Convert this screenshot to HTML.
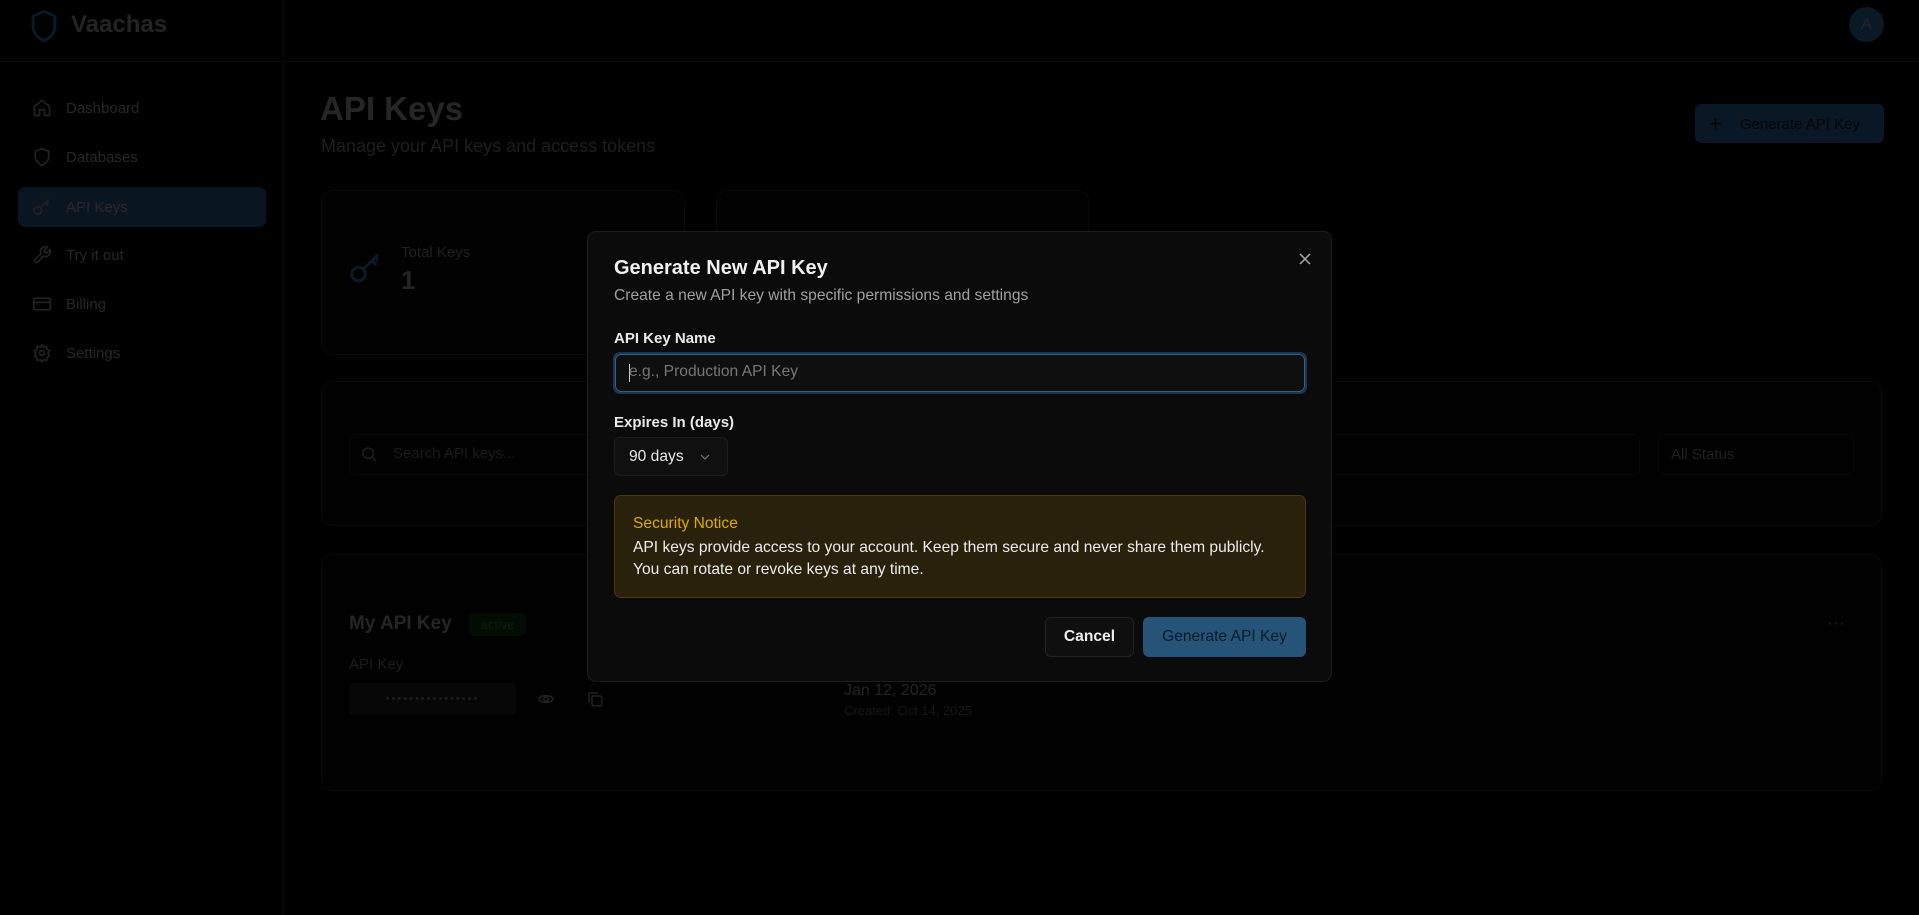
<!DOCTYPE html>
<html><head><meta charset="utf-8"><style>
*{box-sizing:border-box;margin:0;padding:0}
body{width:1919px;height:915px;background:#000;font-family:"Liberation Sans",sans-serif;position:relative;overflow:hidden;color:#262626}
.a{position:absolute}
.card{position:absolute;border:1px solid #0a0a0a;border-radius:12px;background:#010101}
.nav{position:absolute;left:18px;width:248px;height:40px;display:flex;align-items:center;font-size:15px;color:#272727}
.nav svg{margin-left:14px;margin-right:14px}
</style></head><body>
<div class="a" style="left:0;top:61px;width:1919px;height:1px;background:#080808"></div>
<div class="a" style="left:283px;top:0;width:1px;height:915px;background:#080808"></div>
<svg class="a" style="left:29px;top:9px" width="30" height="34" viewBox="0 0 24 28"><path d="M12 2 L21 6 V14 C21 20 17 24 12 26 C7 24 3 20 3 14 V6 Z" fill="none" stroke="#0a1a28" stroke-width="2.4" stroke-linejoin="round"/></svg>
<div class="a" style="left:71px;top:11px;font-size:24px;font-weight:bold;color:#242424">Vaachas</div>
<div class="a" style="left:1849px;top:7px;width:35px;height:35px;border-radius:50%;background:#0a1925;color:#262626;font-size:16px;text-align:center;line-height:35px">A</div>
<div class="nav" style="top:88px"><svg width="20" height="20" viewBox="0 0 24 24" fill="none" stroke="#222" stroke-width="2"><path d="M3 10 L12 3 L21 10 V21 H15 V14 H9 V21 H3 Z"/></svg>Dashboard</div>
<div class="nav" style="top:137px"><svg width="20" height="20" viewBox="0 0 24 24" fill="none" stroke="#222" stroke-width="2"><path d="M12 2 L20 5 V12 C20 17 16 20 12 22 C8 20 4 17 4 12 V5 Z"/></svg>Databases</div>
<div class="nav" style="top:187px;background:#091622;border-radius:7px;color:#2a2a2a"><svg width="20" height="20" viewBox="0 0 24 24" fill="none" stroke="#222" stroke-width="2"><circle cx="7" cy="16" r="4.5"/><path d="M10.5 12.5 L20 3 M16 7 L19 10 M18 5 L20 7"/></svg>API Keys</div>
<div class="nav" style="top:235px"><svg width="20" height="20" viewBox="0 0 24 24" fill="none" stroke="#222" stroke-width="2"><path d="M14.7 6.3a1 1 0 0 0 0 1.4l1.6 1.6a1 1 0 0 0 1.4 0l3.8-3.8a6 6 0 0 1-7.9 7.9l-6.9 6.9a2.1 2.1 0 0 1-3-3l6.9-6.9a6 6 0 0 1 7.9-7.9z"/></svg>Try it out</div>
<div class="nav" style="top:284px"><svg width="20" height="20" viewBox="0 0 24 24" fill="none" stroke="#222" stroke-width="2"><rect x="2" y="5" width="20" height="14" rx="2"/><path d="M2 10 H22"/></svg>Billing</div>
<div class="nav" style="top:333px"><svg width="20" height="20" viewBox="0 0 24 24" fill="none" stroke="#222" stroke-width="2"><circle cx="12" cy="12" r="3"/><path d="M12 2 l2 3 3.5-1 .5 3.5 3 2-2 3 2 3-3 2-.5 3.5-3.5-1-2 3-2-3-3.5 1-.5-3.5-3-2 2-3-2-3 3-2 .5-3.5 3.5 1z"/></svg>Settings</div>
<div class="a" style="left:320px;top:90px;font-size:33px;font-weight:bold;color:#262626">API Keys</div>
<div class="a" style="left:321px;top:136px;font-size:18px;color:#1e1e1e">Manage your API keys and access tokens</div>
<div class="a" style="left:1695px;top:104px;width:189px;height:39px;border-radius:6px;background:#0a1724;color:#050505;font-size:15px;line-height:39px;padding-left:14px">
<span style="font-size:22px;vertical-align:-2px;margin-right:18px;color:#050505">+</span>Generate API Key</div>
<div class="card" style="left:321px;top:190px;width:364px;height:165px"></div>
<svg class="a" style="left:348px;top:250px" width="36" height="36" viewBox="0 0 24 24" fill="none" stroke="#0a1a28" stroke-width="2"><circle cx="7" cy="16" r="4.5"/><path d="M10.5 12.5 L20 3 M16 7 L19 10 M18 5 L20 7"/></svg>
<div class="a" style="left:401px;top:244px;font-size:15px;color:#202020">Total Keys</div>
<div class="a" style="left:401px;top:265px;font-size:26px;font-weight:bold;color:#242424">1</div>
<div class="card" style="left:716px;top:190px;width:373px;height:165px"></div>
<div class="card" style="left:321px;top:381px;width:1561px;height:145px"></div>
<div class="a" style="left:349px;top:434px;width:1291px;height:41px;border:1px solid #080808;border-radius:6px"></div>
<svg class="a" style="left:360px;top:445px" width="18" height="18" viewBox="0 0 24 24" fill="none" stroke="#1e1e1e" stroke-width="2"><circle cx="11" cy="11" r="7"/><path d="M16 16 L21 21"/></svg>
<div class="a" style="left:393px;top:445px;font-size:15px;color:#1c1c1c">Search API keys...</div>
<div class="a" style="left:1658px;top:434px;width:196px;height:41px;border:1px solid #080808;border-radius:6px;font-size:15px;color:#202020;line-height:39px;padding-left:12px">All Status</div>
<div class="card" style="left:321px;top:554px;width:1561px;height:237px"></div>
<div class="a" style="left:349px;top:613px;font-size:19px;font-weight:bold;color:#252525">My API Key</div>
<div class="a" style="left:469px;top:613px;width:57px;height:23px;border-radius:5px;background:#030c03;color:#0a200c;font-size:13px;text-align:center;line-height:23px">active</div>
<div class="a" style="left:349px;top:656px;font-size:15px;color:#1e1e1e">API Key</div>
<div class="a" style="left:349px;top:683px;width:167px;height:32px;border-radius:4px;background:#070707;color:#1e1e1e;font-size:11px;line-height:32px;text-align:center;letter-spacing:2px">••••••••••••••••</div>
<svg class="a" style="left:537px;top:690px" width="18" height="18" viewBox="0 0 24 24" fill="none" stroke="#222" stroke-width="2"><path d="M2 12 C5 6 19 6 22 12 C19 18 5 18 2 12Z"/><circle cx="12" cy="12" r="3"/></svg>
<svg class="a" style="left:586px;top:690px" width="18" height="18" viewBox="0 0 24 24" fill="none" stroke="#222" stroke-width="2"><rect x="8" y="8" width="13" height="13" rx="2"/><path d="M4 16 V4 H16"/></svg>
<div class="a" style="left:844px;top:682px;font-size:16px;color:#242424">Jan 12, 2026</div>
<div class="a" style="left:844px;top:703px;font-size:13px;color:#181818">Created: Oct 14, 2025</div>
<div class="a" style="left:1827px;top:615px;font-size:16px;color:#262626;letter-spacing:1px">···</div>
<!-- modal -->
<div class="a" style="left:587px;top:231px;width:745px;height:451px;background:#0b0b0b;border:1px solid #1e1e1e;border-radius:9px"></div>
<svg class="a" style="left:1298px;top:252px" width="14" height="14" viewBox="0 0 14 14" stroke="#aaa" stroke-width="1.5"><path d="M2 2 L12 12 M12 2 L2 12"/></svg>
<div class="a" style="left:614px;top:257px;font-size:20px;font-weight:bold;color:#f0f0f0">Generate New API Key</div>
<div class="a" style="left:614px;top:287px;font-size:15.6px;color:#a0a0a0">Create a new API key with specific permissions and settings</div>
<div class="a" style="left:614px;top:330px;font-size:15px;font-weight:bold;color:#eaeaea">API Key Name</div>
<div class="a" style="left:613px;top:352px;width:694px;height:42px;border-radius:7px;border:2px solid #1a3650;"></div>
<div class="a" style="left:615px;top:354px;width:690px;height:38px;border-radius:6px;border:1.5px solid #365f86;background:#0f0f0f"></div>
<div class="a" style="left:629px;top:364px;width:1px;height:18px;background:#ccc"></div>
<div class="a" style="left:629px;top:363px;font-size:15.6px;color:#777">e.g., Production API Key</div>
<div class="a" style="left:614px;top:414px;font-size:15px;font-weight:bold;color:#eaeaea">Expires In (days)</div>
<div class="a" style="left:614px;top:437px;width:114px;height:39px;border-radius:6px;border:1px solid #1e1e1e;background:#101010;color:#e8e8e8;font-size:15.6px;line-height:37px;padding-left:14px">90 days<svg style="position:absolute;left:84px;top:14px" width="12" height="10" viewBox="0 0 12 10" fill="none" stroke="#777" stroke-width="1.2"><path d="M2 3 L6 7 L10 3"/></svg></div>
<div class="a" style="left:614px;top:495px;width:692px;height:103px;border-radius:7px;border:1px solid #4a3a0c;background:#2a210c"></div>
<div class="a" style="left:633px;top:515px;font-size:15.6px;color:#dcac00">Security Notice</div>
<div class="a" style="left:633px;top:537px;font-size:15.6px;line-height:22px;color:#ececec">API keys provide access to your account. Keep them secure and never share them publicly.<br>You can rotate or revoke keys at any time.</div>
<div class="a" style="left:1045px;top:617px;width:89px;height:40px;border-radius:6px;border:1px solid #222;background:#0f0f0f;color:#eee;font-size:15.6px;font-weight:bold;text-align:center;line-height:38px">Cancel</div>
<div class="a" style="left:1143px;top:617px;width:163px;height:40px;border-radius:6px;background:#255478;color:#0a1b2a;font-size:15.6px;text-align:center;line-height:40px">Generate API Key</div>
</body></html>
